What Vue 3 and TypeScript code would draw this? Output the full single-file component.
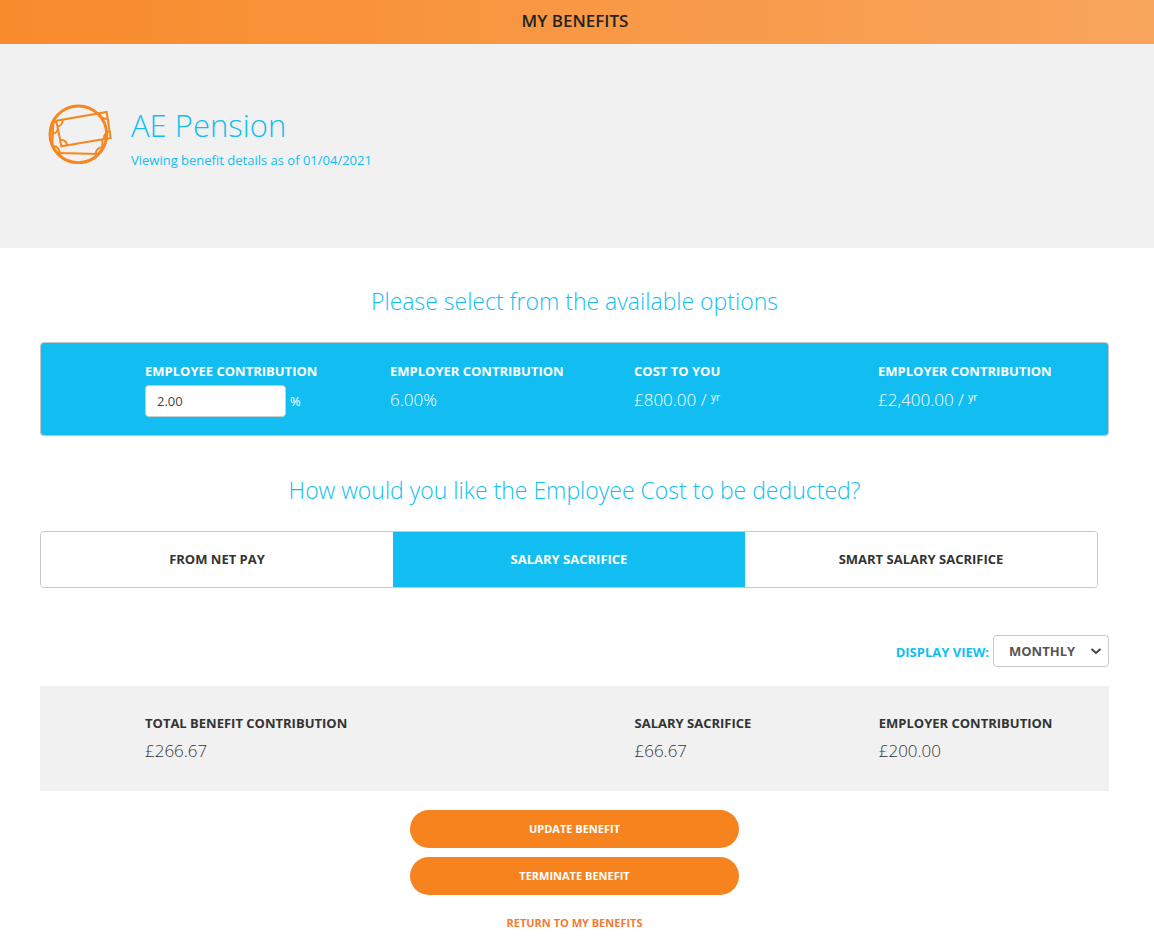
<script setup lang="ts">
import { ref } from 'vue'

interface Figure {
  label: string
  value: string
  per?: string
}

const contribution = ref('2.00')
const view = ref('MONTHLY')
const deduction = ref('SALARY SACRIFICE')
const deductionOptions: string[] = ['FROM NET PAY', 'SALARY SACRIFICE', 'SMART SALARY SACRIFICE']

const costs: Figure[] = [
  { label: 'EMPLOYER CONTRIBUTION', value: '6.00%' },
  { label: 'COST TO YOU', value: '£800.00 /', per: 'yr' },
  { label: 'EMPLOYER CONTRIBUTION', value: '£2,400.00 /', per: 'yr' },
]

const totals: Figure[] = [
  { label: 'TOTAL BENEFIT CONTRIBUTION', value: '£266.67' },
  { label: 'SALARY SACRIFICE', value: '£66.67' },
  { label: 'EMPLOYER CONTRIBUTION', value: '£200.00' },
]
</script>

<template>
  <div class="page">
    <header class="topbar">MY BENEFITS</header>

    <section class="hero">
      <svg class="hero-icon" viewBox="54 42 192 180" fill="none" stroke="#f6861f" aria-hidden="true">
        <circle cx="145" cy="133" r="85" stroke-width="9" />
        <g stroke-width="6">
          <path d="M79 92 L230 66 L242 144 L94 169 Z" />
          <path d="M98 89 A20 20 0 0 1 82 110" />
          <path d="M208 70 A20 20 0 0 0 232 86" />
          <path d="M222 147 A20 20 0 0 1 239 124" />
          <path d="M91 149 A20 20 0 0 1 112 166" />
          <path d="M80 97 H70 L67 165" />
          <path d="M69 130 A14 14 0 0 0 83 116" />
          <path d="M68 168 A20 20 0 0 1 89 189" />
          <path d="M84 189 L206 192" />
          <path d="M217 149 V177" />
          <path d="M197 192 A20 20 0 0 1 217 172" />
        </g>
      </svg>
      <div>
        <h1>AE Pension</h1>
        <p>Viewing benefit details as of 01/04/2021</p>
      </div>
    </section>

    <main class="content">
      <h2>Please select from the available options</h2>

      <section class="panel costs">
        <div class="figure">
          <label for="contribution">EMPLOYEE CONTRIBUTION</label>
          <div class="entry">
            <input id="contribution" v-model="contribution" type="text" />
            <span>%</span>
          </div>
        </div>
        <div v-for="(item, i) in costs" :key="i" class="figure">
          <strong>{{ item.label }}</strong>
          <span class="value">{{ item.value }} <sup v-if="item.per">{{ item.per }}</sup></span>
        </div>
      </section>

      <h2>How would you like the Employee Cost to be deducted?</h2>

      <div class="segments">
        <button
          v-for="option in deductionOptions"
          :key="option"
          type="button"
          :class="{ active: option === deduction }"
          :aria-pressed="option === deduction"
          @click="deduction = option"
        >{{ option }}</button>
      </div>

      <div class="view">
        <label for="view">DISPLAY VIEW:</label>
        <div class="select">
          <select id="view" v-model="view">
            <option>MONTHLY</option>
            <option>ANNUAL</option>
          </select>
          <svg viewBox="0 0 12 8" fill="none" stroke="#444" stroke-width="2" aria-hidden="true">
            <path d="M1.500 2 L6 6 L10.500 2" />
          </svg>
        </div>
      </div>

      <section class="panel totals">
        <div v-for="item in totals" :key="item.label" class="figure">
          <strong>{{ item.label }}</strong>
          <span class="value">{{ item.value }}</span>
        </div>
      </section>

      <div class="actions">
        <button type="button">UPDATE BENEFIT</button>
        <button type="button">TERMINATE BENEFIT</button>
        <a href="#">RETURN TO MY BENEFITS</a>
      </div>
    </main>
  </div>
</template>

<style>
body {
  margin: 0;
  background: #fff;
}
</style>

<style scoped>
.page {
  font-family: "Open Sans", "Noto Sans", sans-serif;
  font-size: 13px;
  line-height: 20px;
  color: #333;
}
.page * {
  box-sizing: border-box;
}
button,
input,
select {
  font-family: inherit;
}
.topbar {
  padding: 9px 4px 11px 0;
  background: linear-gradient(90deg, #f88b2c, #f8a55d);
  color: #222;
  font-size: 17px;
  font-weight: 600;
  line-height: 24px;
  text-align: center;
}
.hero {
  display: flex;
  gap: 19px;
  padding: 60px 48px 76px;
  background: #f1f1f1;
  color: #12bef1;
}
.hero-icon {
  width: 64px;
  height: 60px;
}
h1 {
  margin: 0;
  font-size: 31px;
  font-weight: 300;
  line-height: 42px;
}
p {
  margin: 4px 0 2px;
}
.content {
  padding: 35px 45px 0 40px;
}
h2 {
  margin: 0 0 23px;
  color: #12bef1;
  font-size: 23px;
  font-weight: 300;
  line-height: 36px;
  text-align: center;
}
.panel {
  display: grid;
  grid-template-columns: 245fr 244fr 244fr 230fr;
  padding-left: 105px;
}
.figure {
  display: flex;
  flex-direction: column;
}
.figure label,
.figure strong {
  font-weight: 700;
}
.value {
  font-size: 17px;
  font-weight: 300;
  line-height: 24px;
}
.value sup {
  font-size: 10px;
  font-weight: 400;
  line-height: 0;
  vertical-align: 5px;
}
.costs {
  min-height: 94px;
  margin-bottom: 36px;
  padding-top: 18px;
  padding-bottom: 18px;
  padding-left: 104px;
  border: 1px solid #c4c4c4;
  border-radius: 4px;
  background: #12bef1;
  color: #fff;
}
.costs .value {
  margin-top: 7px;
}
.entry {
  display: flex;
  align-items: center;
  gap: 4px;
  margin-top: 4px;
}
.entry input {
  width: 141px;
  height: 32px;
  padding: 0 11px;
  border: 1px solid #ccc;
  border-radius: 4px;
  background: #fff;
  color: #444;
  font-size: 13px;
}
.segments {
  display: grid;
  grid-template-columns: repeat(3, 1fr);
  margin-right: 11px;
  overflow: hidden;
  border: 1px solid #c8c8c8;
  border-radius: 4px;
}
.segments button {
  height: 55px;
  padding: 0 0 2px;
  border: 0;
  background: #fff;
  color: #333;
  font-size: 13px;
  font-weight: 700;
}
.segments .active {
  background: #12bef1;
  color: #fff;
}
.view {
  display: flex;
  justify-content: flex-end;
  align-items: center;
  gap: 4px;
  margin: 47px 0 19px;
}
.view label {
  padding-top: 2px;
  color: #12bef1;
  font-weight: 700;
}
.select {
  display: grid;
  align-items: center;
}
.select select,
.select svg {
  grid-area: 1 / 1;
}
.select select {
  appearance: none;
  width: 116px;
  height: 32px;
  padding: 0 15px;
  border: 1px solid #c8c8c8;
  border-radius: 4px;
  background: #fff;
  color: #555;
  font-size: 13px;
  font-weight: 700;
}
.select svg {
  justify-self: end;
  width: 12px;
  height: 8px;
  margin-right: 7px;
  pointer-events: none;
}
.totals {
  padding-top: 27px;
  padding-bottom: 28px;
  background: #f1f1f1;
}
.totals .figure:first-child {
  grid-column: span 2;
}
.totals .value {
  margin-top: 6px;
}
.actions {
  display: flex;
  flex-direction: column;
  align-items: center;
  gap: 9px;
  padding-top: 19px;
}
.actions button {
  width: 329px;
  height: 38px;
  padding: 0 0 2px;
  border: 0;
  border-radius: 19px;
  background: #f7831f;
  color: #fff;
  font-size: 11px;
  font-weight: 700;
}
.actions a {
  margin-top: 9px;
  color: #f47a35;
  font-size: 11px;
  font-weight: 700;
  text-decoration: none;
}
</style>
